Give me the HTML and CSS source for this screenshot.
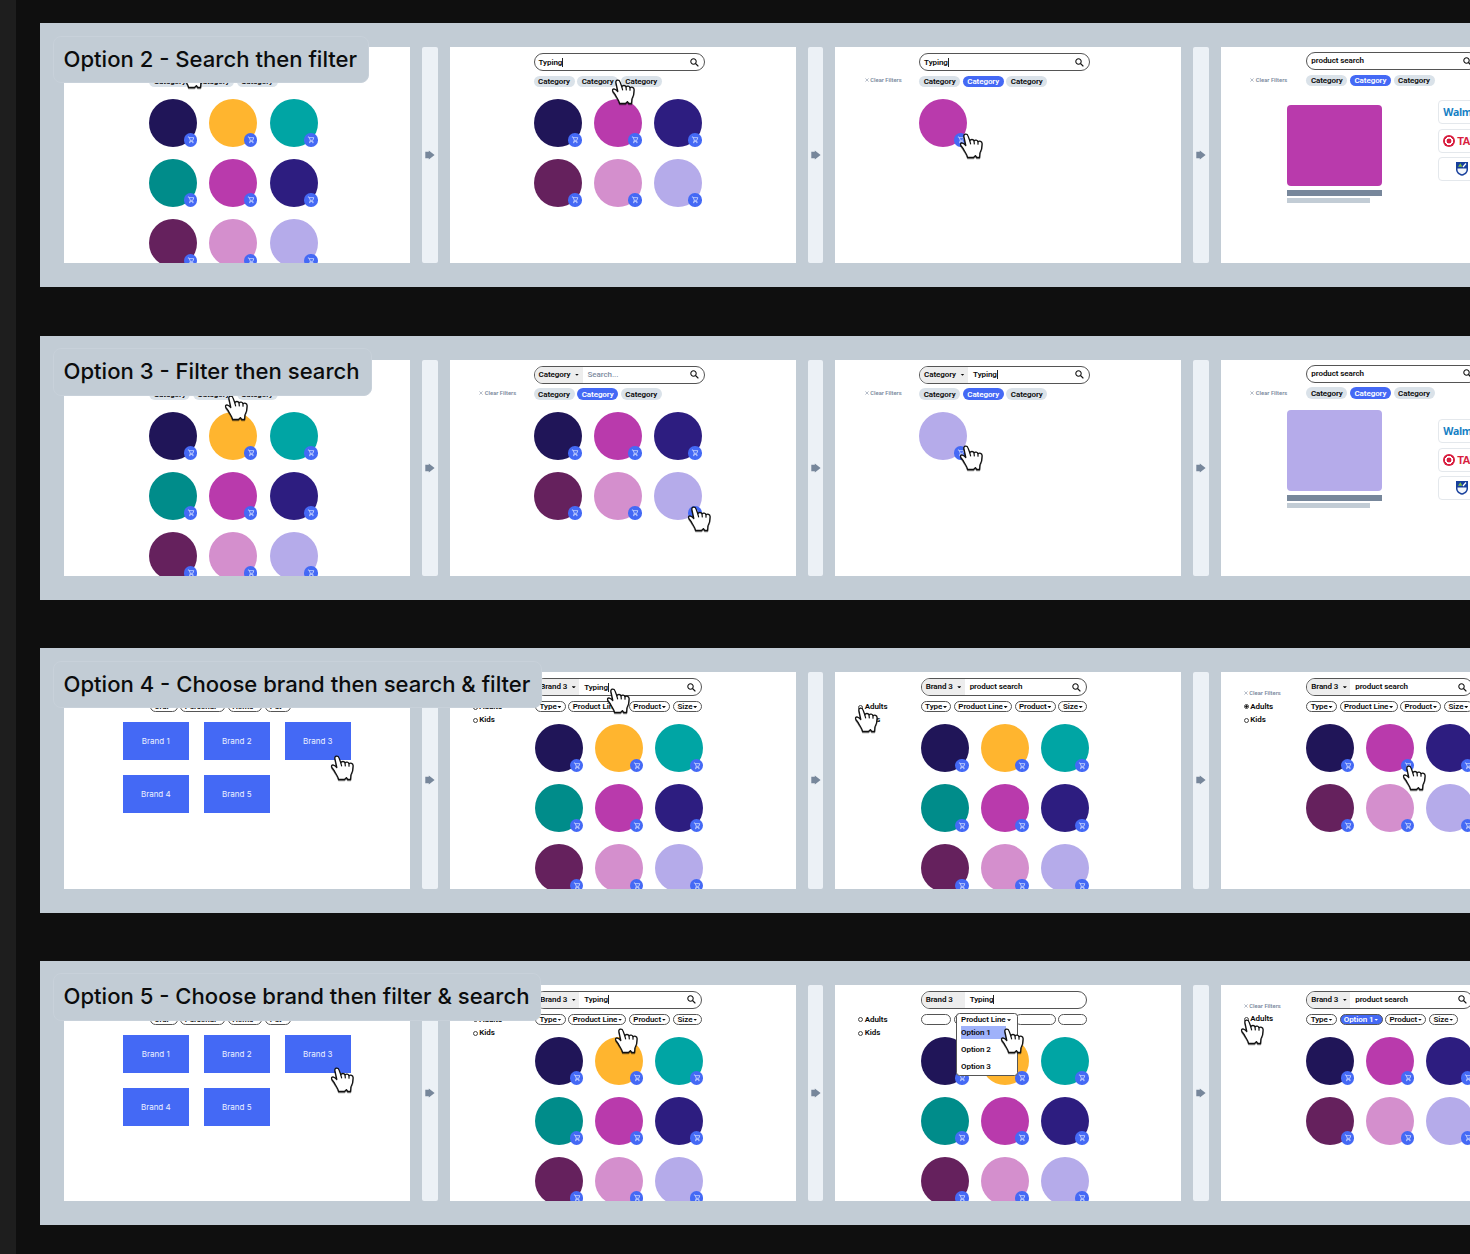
FILE: index.html
```html
<!DOCTYPE html>
<html lang="en">
<head>
<meta charset="utf-8">
<title>Search flow options</title>
<link rel="stylesheet" href="styles.css">
</head>
<body>
<svg class="defs" aria-hidden="true">
  <symbol id="cart" viewBox="0 0 14 14"><path d="M4 4.1h1.2l1.3 3.4h2.6l1-2.7H5.5M6.5 7.5l-.7 1.2h3.8" fill="none" stroke="#dfe6ff" stroke-width=".75"/><circle cx="6" cy="9.9" r=".65" fill="#dfe6ff"/><circle cx="9.2" cy="9.9" r=".65" fill="#dfe6ff"/></symbol>
  <symbol id="lens" viewBox="0 0 9 9"><circle cx="3.5" cy="3.5" r="2.7" fill="none" stroke="#111" stroke-width="1.05"/><path d="M5.5 5.5 8.4 8.4" stroke="#111" stroke-width="1.25"/></symbol>
  <symbol id="arrow" viewBox="0 0 10 10"><path d="M.3 1.8H3.8V.4L9.6 5 3.8 9.6V8.2H.3Z" fill="#77879b"/></symbol>
  <symbol id="cross" viewBox="0 0 4 4"><path d="M.4.4 3.6 3.6M3.6.4.4 3.6" stroke="#8492a6" stroke-width=".6"/></symbol>
  <symbol id="hand" viewBox="0 0 25 27"><path d="M4.9 3.7C4.3.7 8.1.2 9 2.9l1.8 4.9c.9-1.9 3.6-1.6 4.2.1 1.1-1.3 3.5-.9 4 .8 1.5-1.1 4.1-.3 4.1 2 0 4.8-.6 6.8-2.2 9.3l-.3 4.5h-2.8l-1.4-1.9-1.9 1.9H8.6c-.3-2.9-3-5.9-4.3-8.6-.8-1.7-3-3.2-2.8-4.8.4-1.9 3.2-1.3 5.3 1.4Z" fill="#fff" stroke="#111" stroke-width="1.3" stroke-linejoin="round"/><path d="m10.8 7.8.8 3M15 7.9l.3 3M19 8.7v2.5" fill="none" stroke="#111" stroke-width="1.2" stroke-linecap="round"/></symbol>
  <symbol id="shield" viewBox="0 0 12 14"><path d="M0 0h12v7.2c0 3.5-2.4 5.5-6 6.6-3.6-1.1-6-3.1-6-6.6Z" fill="#173f9c"/><path d="M1.5 6.4h9v1c0 2.6-1.8 4-4.5 4.9-2.7-.9-4.5-2.3-4.5-4.9Z" fill="#f2f6fb"/><path d="M2 4.7 4.4 1.2l2 3.5Z" fill="#7cbd42"/><path d="m7 5 3-3.5" stroke="#fff" stroke-width="1.2"/></symbol>
</svg>

<main class="canvas">

  <section class="flow">
    <h2 class="flow-title" style="width:316.5px">Option 2 - Search then filter</h2>
    <article class="frame browse">
      <div class="side"></div>
      <div class="main">
        <div class="search"></div>
        <div class="chips"><span class="chip">Category</span><span class="chip">Category</span><span class="chip">Category</span></div>
        <div class="dots">
          <i class="dot navy"><svg><use href="#cart"/></svg></i><i class="dot amber"><svg><use href="#cart"/></svg></i><i class="dot aqua"><svg><use href="#cart"/></svg></i>
          <i class="dot teal"><svg><use href="#cart"/></svg></i><i class="dot magenta"><svg><use href="#cart"/></svg></i><i class="dot indigo"><svg><use href="#cart"/></svg></i>
          <i class="dot plum"><svg><use href="#cart"/></svg></i><i class="dot pink"><svg><use href="#cart"/></svg></i><i class="dot lilac"><svg><use href="#cart"/></svg></i>
        </div>
      </div>
      <svg class="hand" style="left:116px;top:16px"><use href="#hand"/></svg>
    </article>
    <div class="next"><svg><use href="#arrow"/></svg></div>
    <article class="frame">
      <div class="side"></div>
      <div class="main">
        <div class="search"><b class="typed">Typing</b><svg class="lens"><use href="#lens"/></svg></div>
        <div class="chips"><span class="chip">Category</span><span class="chip">Category</span><span class="chip">Category</span></div>
        <div class="dots">
          <i class="dot navy"><svg><use href="#cart"/></svg></i><i class="dot magenta"><svg><use href="#cart"/></svg></i><i class="dot indigo"><svg><use href="#cart"/></svg></i>
          <i class="dot plum"><svg><use href="#cart"/></svg></i><i class="dot pink"><svg><use href="#cart"/></svg></i><i class="dot lilac"><svg><use href="#cart"/></svg></i>
        </div>
      </div>
      <svg class="hand" style="left:161.5px;top:32px"><use href="#hand"/></svg>
    </article>
    <div class="next"><svg><use href="#arrow"/></svg></div>
    <article class="frame">
      <div class="side"><span class="clear"><svg><use href="#cross"/></svg>Clear Filters</span></div>
      <div class="main">
        <div class="search"><b class="typed">Typing</b><svg class="lens"><use href="#lens"/></svg></div>
        <div class="chips"><span class="chip">Category</span><span class="chip on">Category</span><span class="chip">Category</span></div>
        <div class="dots"><i class="dot magenta"><svg><use href="#cart"/></svg></i></div>
      </div>
      <svg class="hand" style="left:124px;top:85.5px"><use href="#hand"/></svg>
    </article>
    <div class="next"><svg><use href="#arrow"/></svg></div>
    <article class="frame detail">
      <div class="side"><span class="clear"><svg><use href="#cross"/></svg>Clear Filters</span></div>
      <div class="main">
        <div class="search"><b>product search</b><svg class="lens"><use href="#lens"/></svg></div>
        <div class="chips"><span class="chip">Category</span><span class="chip on">Category</span><span class="chip">Category</span></div>
        <div class="product">
          <div class="item"><div class="photo magenta"></div><div class="bar"></div><div class="bar short"></div></div>
          <div class="stores">
            <div class="store walmart">Walmart</div>
            <div class="store target"><i class="bullseye"></i>TARGET</div>
            <div class="store rite"><svg><use href="#shield"/></svg></div>
          </div>
        </div>
      </div>
    </article>
  </section>

  <section class="flow">
    <h2 class="flow-title" style="width:319.5px">Option 3 - Filter then search</h2>
    <article class="frame browse">
      <div class="side"></div>
      <div class="main">
        <div class="search"></div>
        <div class="chips"><span class="chip">Category</span><span class="chip">Category</span><span class="chip">Category</span></div>
        <div class="dots">
          <i class="dot navy"><svg><use href="#cart"/></svg></i><i class="dot amber"><svg><use href="#cart"/></svg></i><i class="dot aqua"><svg><use href="#cart"/></svg></i>
          <i class="dot teal"><svg><use href="#cart"/></svg></i><i class="dot magenta"><svg><use href="#cart"/></svg></i><i class="dot indigo"><svg><use href="#cart"/></svg></i>
          <i class="dot plum"><svg><use href="#cart"/></svg></i><i class="dot pink"><svg><use href="#cart"/></svg></i><i class="dot lilac"><svg><use href="#cart"/></svg></i>
        </div>
      </div>
      <svg class="hand" style="left:159.5px;top:35px"><use href="#hand"/></svg>
    </article>
    <div class="next"><svg><use href="#arrow"/></svg></div>
    <article class="frame">
      <div class="side"><span class="clear"><svg><use href="#cross"/></svg>Clear Filters</span></div>
      <div class="main">
        <div class="search"><span class="scope">Category<i class="caret"></i></span><b class="hint">Search...</b><svg class="lens"><use href="#lens"/></svg></div>
        <div class="chips"><span class="chip">Category</span><span class="chip on">Category</span><span class="chip">Category</span></div>
        <div class="dots">
          <i class="dot navy"><svg><use href="#cart"/></svg></i><i class="dot magenta"><svg><use href="#cart"/></svg></i><i class="dot indigo"><svg><use href="#cart"/></svg></i>
          <i class="dot plum"><svg><use href="#cart"/></svg></i><i class="dot pink"><svg><use href="#cart"/></svg></i><i class="dot lilac"><svg><use href="#cart"/></svg></i>
        </div>
      </div>
      <svg class="hand" style="left:237.5px;top:146.5px"><use href="#hand"/></svg>
    </article>
    <div class="next"><svg><use href="#arrow"/></svg></div>
    <article class="frame">
      <div class="side"><span class="clear"><svg><use href="#cross"/></svg>Clear Filters</span></div>
      <div class="main">
        <div class="search"><span class="scope">Category<i class="caret"></i></span><b class="typed">Typing</b><svg class="lens"><use href="#lens"/></svg></div>
        <div class="chips"><span class="chip">Category</span><span class="chip on">Category</span><span class="chip">Category</span></div>
        <div class="dots"><i class="dot lilac"><svg><use href="#cart"/></svg></i></div>
      </div>
      <svg class="hand" style="left:124px;top:85.5px"><use href="#hand"/></svg>
    </article>
    <div class="next"><svg><use href="#arrow"/></svg></div>
    <article class="frame detail raised">
      <div class="side"><span class="clear"><svg><use href="#cross"/></svg>Clear Filters</span></div>
      <div class="main">
        <div class="search"><b>product search</b><svg class="lens"><use href="#lens"/></svg></div>
        <div class="chips"><span class="chip">Category</span><span class="chip on">Category</span><span class="chip">Category</span></div>
        <div class="product">
          <div class="item"><div class="photo lilac"></div><div class="bar"></div><div class="bar short"></div></div>
          <div class="stores">
            <div class="store walmart">Walmart</div>
            <div class="store target"><i class="bullseye"></i>TARGET</div>
            <div class="store rite"><svg><use href="#shield"/></svg></div>
          </div>
        </div>
      </div>
    </article>
  </section>

  <section class="flow brand">
    <h2 class="flow-title" style="width:489px">Option 4 - Choose brand then search &amp; filter</h2>
    <article class="frame brands">
      <div class="chips"><span class="pill" style="width:28px">Oral<i class="caret"></i></span><span class="pill" style="width:45px">Personal<i class="caret"></i></span><span class="pill" style="width:34.5px">Home<i class="caret"></i></span><span class="pill" style="width:26px">Pet<i class="caret"></i></span></div>
      <div class="tiles"><span class="tile">Brand 1</span><span class="tile">Brand 2</span><span class="tile">Brand 3</span><span class="tile">Brand 4</span><span class="tile">Brand 5</span></div>
      <svg class="hand" style="left:266px;top:82.5px"><use href="#hand"/></svg>
    </article>
    <div class="next"><svg><use href="#arrow"/></svg></div>
    <article class="frame">
      <div class="side"><span class="radio"><i></i>Adults</span><span class="radio"><i></i>Kids</span></div>
      <div class="main">
        <div class="search"><span class="scope">Brand 3<i class="caret"></i></span><b class="typed">Typing</b><svg class="lens"><use href="#lens"/></svg></div>
        <div class="chips"><span class="pill type">Type<i class="caret"></i></span><span class="pill line">Product Line<i class="caret"></i></span><span class="pill prod">Product<i class="caret"></i></span><span class="pill size">Size<i class="caret"></i></span></div>
        <div class="dots">
          <i class="dot navy"><svg><use href="#cart"/></svg></i><i class="dot amber"><svg><use href="#cart"/></svg></i><i class="dot aqua"><svg><use href="#cart"/></svg></i>
          <i class="dot teal"><svg><use href="#cart"/></svg></i><i class="dot magenta"><svg><use href="#cart"/></svg></i><i class="dot indigo"><svg><use href="#cart"/></svg></i>
          <i class="dot plum"><svg><use href="#cart"/></svg></i><i class="dot pink"><svg><use href="#cart"/></svg></i><i class="dot lilac"><svg><use href="#cart"/></svg></i>
        </div>
      </div>
      <svg class="hand" style="left:156px;top:16px"><use href="#hand"/></svg>
    </article>
    <div class="next"><svg><use href="#arrow"/></svg></div>
    <article class="frame">
      <div class="side"><span class="radio"><i></i>Adults</span><span class="radio"><i></i>Kids</span></div>
      <div class="main">
        <div class="search"><span class="scope">Brand 3<i class="caret"></i></span><b>product search</b><svg class="lens"><use href="#lens"/></svg></div>
        <div class="chips"><span class="pill type">Type<i class="caret"></i></span><span class="pill line">Product Line<i class="caret"></i></span><span class="pill prod">Product<i class="caret"></i></span><span class="pill size">Size<i class="caret"></i></span></div>
        <div class="dots">
          <i class="dot navy"><svg><use href="#cart"/></svg></i><i class="dot amber"><svg><use href="#cart"/></svg></i><i class="dot aqua"><svg><use href="#cart"/></svg></i>
          <i class="dot teal"><svg><use href="#cart"/></svg></i><i class="dot magenta"><svg><use href="#cart"/></svg></i><i class="dot indigo"><svg><use href="#cart"/></svg></i>
          <i class="dot plum"><svg><use href="#cart"/></svg></i><i class="dot pink"><svg><use href="#cart"/></svg></i><i class="dot lilac"><svg><use href="#cart"/></svg></i>
        </div>
      </div>
      <svg class="hand" style="left:18.5px;top:34.5px"><use href="#hand"/></svg>
    </article>
    <div class="next"><svg><use href="#arrow"/></svg></div>
    <article class="frame">
      <div class="side"><span class="clear"><svg><use href="#cross"/></svg>Clear Filters</span><span class="radio"><i class="picked"></i>Adults</span><span class="radio"><i></i>Kids</span></div>
      <div class="main">
        <div class="search"><span class="scope">Brand 3<i class="caret"></i></span><b>product search</b><svg class="lens"><use href="#lens"/></svg></div>
        <div class="chips"><span class="pill type">Type<i class="caret"></i></span><span class="pill line">Product Line<i class="caret"></i></span><span class="pill prod">Product<i class="caret"></i></span><span class="pill size">Size<i class="caret"></i></span></div>
        <div class="dots">
          <i class="dot navy"><svg><use href="#cart"/></svg></i><i class="dot magenta"><svg><use href="#cart"/></svg></i><i class="dot indigo"><svg><use href="#cart"/></svg></i>
          <i class="dot plum"><svg><use href="#cart"/></svg></i><i class="dot pink"><svg><use href="#cart"/></svg></i><i class="dot lilac"><svg><use href="#cart"/></svg></i>
        </div>
      </div>
      <svg class="hand" style="left:181px;top:92.5px"><use href="#hand"/></svg>
    </article>
  </section>

  <section class="flow brand">
    <h2 class="flow-title" style="width:488.5px">Option 5 - Choose brand then filter &amp; search</h2>
    <article class="frame brands">
      <div class="chips"><span class="pill" style="width:28px">Oral<i class="caret"></i></span><span class="pill" style="width:45px">Personal<i class="caret"></i></span><span class="pill" style="width:34.5px">Home<i class="caret"></i></span><span class="pill" style="width:26px">Pet<i class="caret"></i></span></div>
      <div class="tiles"><span class="tile">Brand 1</span><span class="tile">Brand 2</span><span class="tile">Brand 3</span><span class="tile">Brand 4</span><span class="tile">Brand 5</span></div>
      <svg class="hand" style="left:266px;top:82.5px"><use href="#hand"/></svg>
    </article>
    <div class="next"><svg><use href="#arrow"/></svg></div>
    <article class="frame">
      <div class="side"><span class="radio"><i></i>Adults</span><span class="radio"><i></i>Kids</span></div>
      <div class="main">
        <div class="search"><span class="scope">Brand 3<i class="caret"></i></span><b class="typed">Typing</b><svg class="lens"><use href="#lens"/></svg></div>
        <div class="chips"><span class="pill type">Type<i class="caret"></i></span><span class="pill line">Product Line<i class="caret"></i></span><span class="pill prod">Product<i class="caret"></i></span><span class="pill size">Size<i class="caret"></i></span></div>
        <div class="dots">
          <i class="dot navy"><svg><use href="#cart"/></svg></i><i class="dot amber"><svg><use href="#cart"/></svg></i><i class="dot aqua"><svg><use href="#cart"/></svg></i>
          <i class="dot teal"><svg><use href="#cart"/></svg></i><i class="dot magenta"><svg><use href="#cart"/></svg></i><i class="dot indigo"><svg><use href="#cart"/></svg></i>
          <i class="dot plum"><svg><use href="#cart"/></svg></i><i class="dot pink"><svg><use href="#cart"/></svg></i><i class="dot lilac"><svg><use href="#cart"/></svg></i>
        </div>
      </div>
      <svg class="hand" style="left:164.5px;top:43.5px"><use href="#hand"/></svg>
    </article>
    <div class="next"><svg><use href="#arrow"/></svg></div>
    <article class="frame">
      <div class="side"><span class="radio"><i></i>Adults</span><span class="radio"><i></i>Kids</span></div>
      <div class="main">
        <div class="search"><span class="scope">Brand 3</span><b class="typed">Typing</b></div>
        <div class="chips"><span class="pill type"></span><span class="pill line"></span><span class="pill prod"></span><span class="pill size"></span></div>
        <div class="dots">
          <i class="dot navy"><svg><use href="#cart"/></svg></i><i class="dot amber"><svg><use href="#cart"/></svg></i><i class="dot aqua"><svg><use href="#cart"/></svg></i>
          <i class="dot teal"><svg><use href="#cart"/></svg></i><i class="dot magenta"><svg><use href="#cart"/></svg></i><i class="dot indigo"><svg><use href="#cart"/></svg></i>
          <i class="dot plum"><svg><use href="#cart"/></svg></i><i class="dot pink"><svg><use href="#cart"/></svg></i><i class="dot lilac"><svg><use href="#cart"/></svg></i>
        </div>
      </div>
      <div class="menu"><span class="menu-head">Product Line<i class="caret"></i></span><span class="choice hot">Option 1</span><span class="choice">Option 2</span><span class="choice">Option 3</span></div>
      <svg class="hand" style="left:165px;top:43.5px"><use href="#hand"/></svg>
    </article>
    <div class="next"><svg><use href="#arrow"/></svg></div>
    <article class="frame">
      <div class="side"><span class="clear"><svg><use href="#cross"/></svg>Clear Filters</span><span class="radio"><i></i>Adults</span></div>
      <div class="main">
        <div class="search"><span class="scope">Brand 3<i class="caret"></i></span><b>product search</b><svg class="lens"><use href="#lens"/></svg></div>
        <div class="chips"><span class="pill type">Type<i class="caret"></i></span><span class="pill on" style="width:43px">Option 1<i class="caret"></i></span><span class="pill prod">Product<i class="caret"></i></span><span class="pill size">Size<i class="caret"></i></span></div>
        <div class="dots">
          <i class="dot navy"><svg><use href="#cart"/></svg></i><i class="dot magenta"><svg><use href="#cart"/></svg></i><i class="dot indigo"><svg><use href="#cart"/></svg></i>
          <i class="dot plum"><svg><use href="#cart"/></svg></i><i class="dot pink"><svg><use href="#cart"/></svg></i><i class="dot lilac"><svg><use href="#cart"/></svg></i>
        </div>
      </div>
      <svg class="hand" style="left:19px;top:34px"><use href="#hand"/></svg>
    </article>
  </section>

</main>
</body>
</html>
```

FILE: styles.css
```css
* { box-sizing: border-box; }
html, body { height: 100%; }
html { overflow: hidden; }
body {
  margin: 0;
  overflow: hidden;
  background: #0f0f0f;
  border-left: 16px solid #1e1e1e;
  font-family: Roboto, "Liberation Sans", sans-serif;
  font-size: 8px;
  font-weight: 650;
  letter-spacing: -.08px;
  line-height: 10px;
  color: #0a0a0a;
}
b { font-weight: inherit; }
i { font-style: normal; }
.defs { position: absolute; width: 0; height: 0; }

.canvas {
  display: flex;
  flex-direction: column;
  gap: 48.2px;
  width: 100%;
  overflow: hidden;
  padding: 23px 0 0 24px;
}
.flow {
  position: relative;
  display: flex;
  gap: 12px;
  height: 264.4px;
  flex: none;
  padding: 24px;
  background: #c2ccd5;
}
.flow-title {
  position: absolute;
  z-index: 2;
  left: 12.5px;
  top: 12.5px;
  height: 47.5px;
  margin: 0;
  padding-left: 10px;
  border: 1px solid #c8d1da;
  border-radius: 8px;
  background: #c2ccd5;
  font: 500 22.1px/45px Inter, sans-serif;
  letter-spacing: 0;
  white-space: nowrap;
  color: #0b0c0d;
}

.frame {
  position: relative;
  display: flex;
  flex: none;
  width: 346.4px;
  height: 216.4px;
  overflow: hidden;
  background: #fff;
}
.next {
  display: flex;
  align-items: center;
  justify-content: center;
  flex: none;
  width: 15.17px;
  border-radius: 2px;
  background: #ecf1f6;
}
.next svg { width: 10px; height: 10px; }

.side {
  display: flex;
  flex-direction: column;
  flex: none;
  width: 84px;
  padding: 28.4px 0 0 29.5px;
}
.browse .side { width: 85.4px; }
.detail .side { width: 85.7px; }
.brand .side { width: 85.6px; padding: 29.9px 0 0 23px; gap: 3.4px; }
.brand .side:has(.clear) { padding-top: 16.3px; }
.clear {
  display: flex;
  align-items: center;
  gap: 1.7px;
  font-size: 5.8px;
  letter-spacing: 0;
  white-space: nowrap;
  color: #7c8ba0;
}
.clear svg { width: 4px; height: 4px; }
.radio { display: flex; align-items: center; gap: 1.7px; }
.radio i {
  width: 5px;
  height: 5px;
  border: 1px solid #444;
  border-radius: 50%;
}
.radio .picked { background: radial-gradient(#111 45%, #fff 60%); }

.main { padding-top: 6px; flex: none; }
.detail .main { padding-top: 5px; }
.search {
  display: flex;
  align-items: center;
  width: 171.4px;
  height: 18.3px;
  overflow: hidden;
  padding-left: 4px;
  border: 1px solid #555;
  border-radius: 9.15px;
}
.brand .search { width: 166.4px; }
.search:has(.scope) { padding-left: 0; }
.scope {
  display: flex;
  align-items: center;
  gap: 4.5px;
  align-self: stretch;
  width: 48px;
  margin-right: 5px;
  padding-left: 4px;
  background: #ededed;
}
.brand .scope { width: 43px; }
.typed { border-right: 1px solid #222; line-height: 9px; }
.hint { color: #7c8ba0; font-weight: 500; }
.lens { width: 9px; height: 9px; margin-left: auto; margin-right: 5px; }
.caret {
  width: 4px;
  height: 2.2px;
  flex: none;
  background: currentColor;
  clip-path: polygon(0 0, 100% 0, 50% 100%);
}

.chips { display: flex; gap: 2.6px; height: 11.4px; margin: 4.5px 0 11.8px; }
.chip, .pill {
  display: flex;
  align-items: center;
  justify-content: center;
  flex: none;
  padding-top: 1px;
  border-radius: 6px;
}
.chip { width: 41px; background: #dae2e9; }
.pill { gap: .8px; border: 1px solid #555; white-space: nowrap; }
.chip.on, .pill.on { background: #4469f5; color: #fff; }
.type { width: 30.7px; }
.line { width: 58px; }
.prod { width: 41.2px; }
.size { width: 29px; }

.dots { display: grid; grid-template-columns: repeat(3, 48px); gap: 12.1px; }
.dot {
  display: flex;
  align-items: flex-end;
  justify-content: flex-end;
  height: 48px;
  border-radius: 50%;
}
.dot svg { width: 13.6px; height: 13.6px; border-radius: 50%; background: #4469f5; }
.navy { background: #201558; }
.amber { background: #ffb52f; }
.aqua { background: #00a5a4; }
.teal { background: #008c8a; }
.magenta { background: #b93aac; }
.indigo { background: #2d1d80; }
.plum { background: #65215d; }
.pink { background: #d48fcd; }
.lilac { background: #b5abea; }

.product { display: flex; gap: 56px; margin: 14.2px 0 0 -19.3px; }
.detail .chips { margin-bottom: 0; }
.item { display: flex; flex-direction: column; gap: 2px; width: 95.3px; margin-top: 5px; }
.photo { height: 80.2px; margin-bottom: 2.8px; border-radius: 4px; }
.bar { height: 5.5px; background: #77879b; }
.bar.short { width: 83px; background: #c2ccd5; }
.raised .item { margin-top: -2.5px; }
.raised .stores { margin-top: 6.4px; }
.stores { display: flex; flex-direction: column; gap: 4.5px; }
.store {
  display: flex;
  align-items: center;
  gap: 2px;
  width: 64px;
  height: 23.9px;
  padding-left: 4px;
  border: 1px solid #e4e8ec;
  border-radius: 4px;
  font: 700 10.5px/12px "Open Sans", sans-serif;
  letter-spacing: -.45px;
}
.walmart { color: #1480c4; }
.target { color: #d81e3f; font: 700 11px/12px "Liberation Sans", sans-serif; letter-spacing: -.8px; }
.bullseye {
  width: 12px;
  height: 12px;
  border-radius: 50%;
  background: radial-gradient(circle, #d81e3f 2.2px, #fff 2.7px 3.8px, #d81e3f 4.3px);
}
.rite { padding-left: 17px; }
.rite svg { width: 12px; height: 14px; }

.brands { flex-direction: column; padding: 28.9px 0 0 58.7px; }
.brands .chips { margin: 0 0 9.7px 27px; flex: none; }
.tiles { display: grid; grid-template-columns: repeat(3, 66.2px); gap: 15px 14.8px; }
.tile {
  display: flex;
  align-items: center;
  justify-content: center;
  height: 38px;
  background: #4469f5;
  color: #edf1ff;
  font: 400 8px/10px Inter, sans-serif;
  letter-spacing: 0;
}

.menu {
  position: absolute;
  left: 121px;
  top: 28.5px;
  width: 62px;
  height: 63px;
  display: flex;
  flex-direction: column;
  padding: 0 4px;
  border: 1px solid #555;
  border-radius: 3.5px;
  background: #fff;
}
.menu-head { display: flex; align-items: center; gap: 1.5px; height: 13px; white-space: nowrap; }
.choice { height: 13px; margin-bottom: 4px; line-height: 13px; }
.hot { width: 45px; margin-top: 1px; background: #9fb2fa; }
.menu .choice { position: static; }
.menu { padding-top: 1px; }

.hand {
  position: absolute;
  width: 25px;
  height: 27px;
  filter: drop-shadow(0 1px .6px rgba(0, 0, 0, .45));
}
```
